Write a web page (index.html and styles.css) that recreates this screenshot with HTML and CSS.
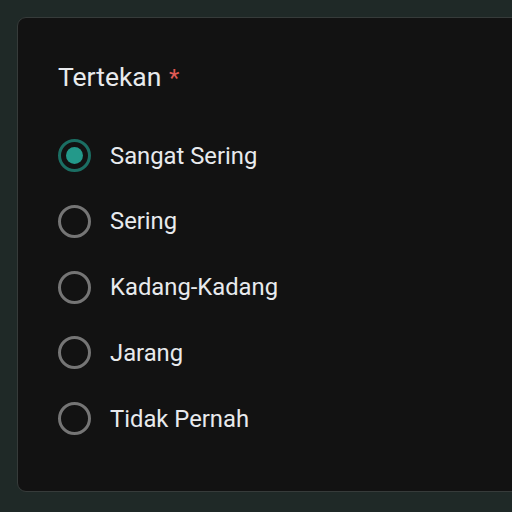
FILE: index.html
```html
<!DOCTYPE html>
<html>
<head>
<meta charset="utf-8">
<link rel="stylesheet" href="styles.css">
</head>
<body>
<div class="card">
  <div class="title">Tertekan <span class="req">*</span></div>
  <div class="options">
    <div class="opt"><span class="radio checked"></span><span class="label">Sangat Sering</span></div>
    <div class="opt"><span class="radio"></span><span class="label">Sering</span></div>
    <div class="opt"><span class="radio"></span><span class="label">Kadang-Kadang</span></div>
    <div class="opt"><span class="radio"></span><span class="label">Jarang</span></div>
    <div class="opt"><span class="radio"></span><span class="label">Tidak Pernah</span></div>
  </div>
</div>
</body>
</html>
```
FILE: styles.css
```css
html, body {
  margin: 0;
  padding: 0;
  background: #1f2927;
  width: 512px;
  height: 512px;
  overflow: hidden;
}
body {
  font-family: Roboto, "Liberation Sans", sans-serif;
  color: #e8eaed;
}
.card {
  margin: 17px 0 0 17px;
  width: 520px;
  height: 475px;
  box-sizing: border-box;
  background: #121212;
  border: 1px solid #363b3a;
  border-radius: 9px;
  padding: 44px 0 0 40px;
}
.title {
  font-size: 26.5px;
  line-height: 30px;
  height: 30px;
}
.req {
  color: #e05a55;
  font-size: 24px;
  margin-left: 1px;
}
.options {
  margin-top: 47px;
  display: flex;
  flex-direction: column;
  gap: 32.75px;
}
.opt {
  display: flex;
  align-items: center;
  height: 33px;
  gap: 19px;
}
.radio {
  width: 33px;
  height: 33px;
  box-sizing: border-box;
  border: 3px solid #757575;
  border-radius: 50%;
  flex: none;
  position: relative;
}
.radio.checked {
  border-color: #1b6e63;
}
.radio.checked::after {
  content: "";
  position: absolute;
  left: 5px;
  top: 5px;
  width: 17px;
  height: 17px;
  border-radius: 50%;
  background: #23998a;
}
.label {
  font-size: 23.8px;
  line-height: 28px;
}
```
